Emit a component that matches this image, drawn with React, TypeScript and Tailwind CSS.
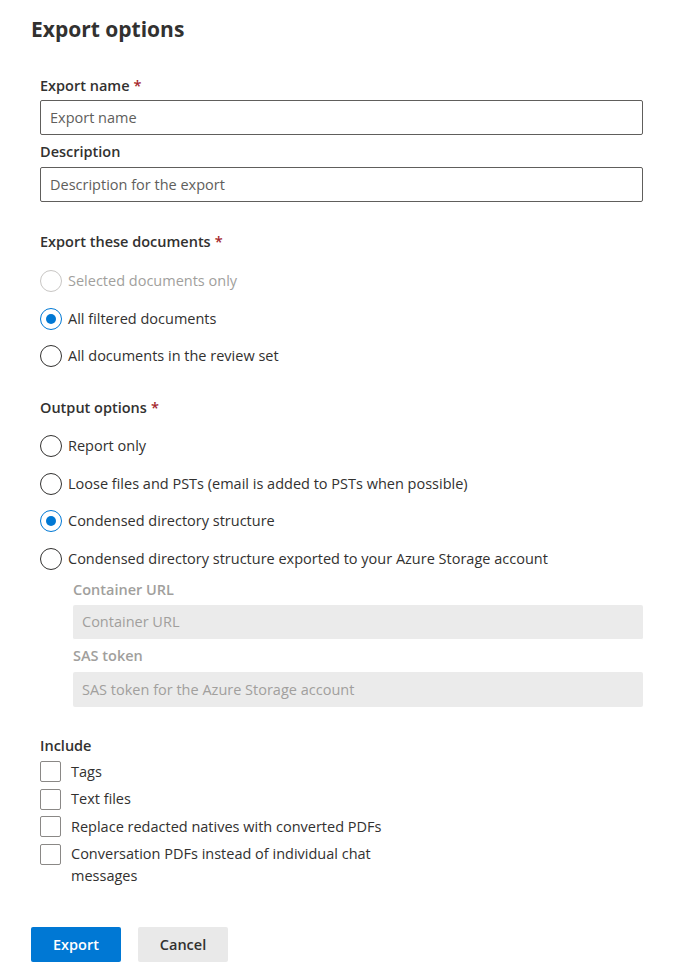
import React, { useState } from 'react';

const font = { fontFamily: '"Open Sans", "Noto Sans", sans-serif' };

const Required: React.FC = () => <span className="text-[#a4262c] ml-1">*</span>;

interface RadioProps {
  label: string;
  checked?: boolean;
  disabled?: boolean;
  onSelect?: () => void;
}

const Radio: React.FC<RadioProps> = ({ label, checked, disabled, onSelect }) => (
  <button
    type="button"
    onClick={disabled ? undefined : onSelect}
    className="flex items-center h-[22px] text-left"
  >
    <span
      className={`w-[22px] h-[22px] rounded-full border flex items-center justify-center shrink-0 ${
        disabled
          ? 'border-[#c8c6c4]'
          : checked
          ? 'border-[#0078d4]'
          : 'border-[#323130]'
      }`}
    >
      {checked && <span className="w-[10px] h-[10px] rounded-full bg-[#0078d4]" />}
    </span>
    <span className={`ml-[6px] ${disabled ? 'text-[#a19f9d]' : 'text-[#323130]'}`}>{label}</span>
  </button>
);

const Checkbox: React.FC<{ label: string }> = ({ label }) => {
  const [on, setOn] = useState(false);
  return (
    <button type="button" onClick={() => setOn(!on)} className="flex items-start text-left">
      <span
        className={`w-[21px] h-[21px] rounded-[2px] border shrink-0 mt-[0.5px] ${
          on ? 'bg-[#0078d4] border-[#0078d4]' : 'border-[#8a8886]'
        }`}
      />
      <span className="ml-[10px] leading-[22px] max-w-[320px]">{label}</span>
    </button>
  );
};

export default function App() {
  const [docs, setDocs] = useState('filtered');
  const [output, setOutput] = useState('condensed');

  return (
    <div className="bg-white min-h-screen text-[14.5px] text-[#323130] pl-[31px] pt-[15px] pb-[14px]" style={font}>
      <h1 className="text-[21px] leading-[28px] font-bold">Export options</h1>

      <div className="pl-[9px] w-[612px]">
        {/* name + description */}
        <div className="mt-[33px] font-semibold leading-5">
          Export name
          <Required />
        </div>
        <input
          placeholder="Export name"
          className="mt-[4px] w-full h-[35px] border border-[#605e5c] rounded-[2px] px-[9px] placeholder-[#605e5c] outline-none"
        />
        <div className="mt-[7px] font-semibold leading-5">Description</div>
        <input
          placeholder="Description for the export"
          className="mt-[5px] w-full h-[35px] border border-[#605e5c] rounded-[2px] px-[9px] placeholder-[#605e5c] outline-none"
        />

        {/* documents */}
        <div className="mt-[30px] font-semibold leading-5">
          Export these documents
          <Required />
        </div>
        <div className="mt-[18px] flex flex-col gap-[15.5px]">
          <Radio label="Selected documents only" disabled />
          <Radio label="All filtered documents" checked={docs === 'filtered'} onSelect={() => setDocs('filtered')} />
          <Radio label="All documents in the review set" checked={docs === 'all'} onSelect={() => setDocs('all')} />
        </div>

        {/* output */}
        <div className="mt-[31px] font-semibold leading-5">
          Output options
          <Required />
        </div>
        <div className="mt-[17px] flex flex-col gap-[15.5px]">
          <Radio label="Report only" checked={output === 'report'} onSelect={() => setOutput('report')} />
          <Radio
            label="Loose files and PSTs (email is added to PSTs when possible)"
            checked={output === 'loose'}
            onSelect={() => setOutput('loose')}
          />
          <Radio
            label="Condensed directory structure"
            checked={output === 'condensed'}
            onSelect={() => setOutput('condensed')}
          />
          <Radio
            label="Condensed directory structure exported to your Azure Storage account"
            checked={output === 'azure'}
            onSelect={() => setOutput('azure')}
          />
        </div>

        <div className="pl-[33px]">
          <div className="mt-[10px] font-semibold leading-5 text-[#a19f9d]">Container URL</div>
          <input
            disabled
            placeholder="Container URL"
            className="mt-[5px] w-full h-[35px] rounded-[2px] bg-[#ebebeb] px-[9px] placeholder-[#a19f9d] border-b border-b-white"
          />
          <div className="mt-[6px] font-semibold leading-5 text-[#a19f9d]">SAS token</div>
          <input
            disabled
            placeholder="SAS token for the Azure Storage account"
            className="mt-[6px] w-full h-[35px] rounded-[2px] bg-[#ebebeb] px-[9px] placeholder-[#a19f9d]"
          />
        </div>

        {/* include */}
        <div className="mt-[29px] font-semibold leading-5">Include</div>
        <div className="mt-[5px] flex flex-col gap-[5.5px]">
          <Checkbox label="Tags" />
          <Checkbox label="Text files" />
          <Checkbox label="Replace redacted natives with converted PDFs" />
          <Checkbox label="Conversation PDFs instead of individual chat messages" />
        </div>
      </div>

      {/* actions */}
      <div className="mt-[40px] flex gap-[17px]">
        <button type="button" className="w-[90px] h-[35px] rounded-[2px] bg-[#0078d4] text-white font-semibold">
          Export
        </button>
        <button type="button" className="w-[90px] h-[35px] rounded-[2px] bg-[#e9e9e9] text-[#323130] font-semibold">
          Cancel
        </button>
      </div>
    </div>
  );
}
